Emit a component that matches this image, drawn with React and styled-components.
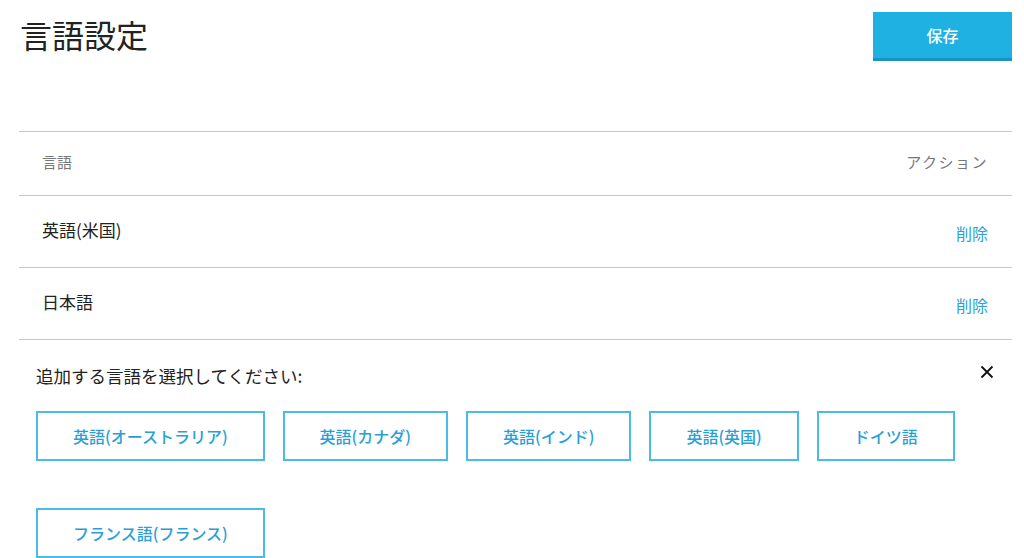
import styled, { createGlobalStyle } from 'styled-components'

const Global = createGlobalStyle`
body {
  margin: 0;
  background: #fff;
  font-family: "Noto Sans CJK JP", "Noto Sans", sans-serif;
  color: #222;
}
`;

const Page = styled.div`
display: flex;
flex-direction: column;
padding: 12px 12px 0 19px;
`;

const Header = styled.div`
display: flex;
justify-content: space-between;
align-items: flex-start;
height: 119px;
`;

const Title = styled.h1`
margin: 3px 0 0 1px;
font-size: 32px;
font-weight: 400;
line-height: 38px;
color: #222;
`;

const SaveButton = styled.button`
width: 139px;
height: 49px;
border: none;
border-bottom: 3px solid #1a93c0;
background: #20b1e3;
color: #fff;
font-family: inherit;
font-size: 16px;
font-weight: 500;
padding: 0;
cursor: pointer;
`;

const Table = styled.div`
display: flex;
flex-direction: column;
border-top: 1px solid #c8c8c8;
`;

const Row = styled.div`
display: flex;
justify-content: space-between;
align-items: center;
box-sizing: border-box;
height: ${p => p.$head ? 64 : 72}px;
padding: 0 24px 4px 23px;
border-bottom: 1px solid #c8c8c8;
`;

const HeadCell = styled.span`
font-size: 15px;
color: #777;
letter-spacing: ${p => p.$spaced ? '1.5px' : '0'};
`;

const LangName = styled.span`
font-size: 17px;
color: #222;
`;

const DeleteLink = styled.a`
font-size: 16px;
color: #2a9fd6;
margin-top: 6px;
cursor: pointer;
`;

const AddSection = styled.div`
display: flex;
flex-direction: column;
padding: 20px 18px 0 17px;
`;

const AddHead = styled.div`
display: flex;
justify-content: space-between;
align-items: center;
height: 30px;
`;

const Prompt = styled.span`
font-size: 17.5px;
color: #222;
`;

const CloseIcon = styled.svg`
width: 14px;
height: 14px;
margin-top: -6px;
cursor: pointer;
`;

const Choices = styled.div`
display: flex;
flex-wrap: wrap;
column-gap: 18px;
row-gap: 47px;
margin-top: 21px;
`;

const Choice = styled.button`
height: 50px;
padding: 0 35px;
background: #fff;
border: 2px solid #4dbbe8;
color: #2a9fd6;
font-family: inherit;
font-size: 16px;
font-weight: 500;
cursor: pointer;
`;

const choices = [
  '英語(オーストラリア)',
  '英語(カナダ)',
  '英語(インド)',
  '英語(英国)',
  'ドイツ語',
  'フランス語(フランス)',
];

const languages = ['英語(米国)', '日本語'];

const App = () => {
  return (
    <Page>
      <Global />
      <Header>
        <Title>言語設定</Title>
        <SaveButton>保存</SaveButton>
      </Header>
      <Table>
        <Row $head>
          <HeadCell>言語</HeadCell>
          <HeadCell $spaced>アクション</HeadCell>
        </Row>
        {languages.map(l => (
          <Row key={l}>
            <LangName>{l}</LangName>
            <DeleteLink>削除</DeleteLink>
          </Row>
        ))}
      </Table>
      <AddSection>
        <AddHead>
          <Prompt>追加する言語を選択してください:</Prompt>
          <CloseIcon viewBox="0 0 14 14">
            <path d="M1.5 1.5 L12.5 12.5 M12.5 1.5 L1.5 12.5" stroke="#111" strokeWidth="1.8" fill="none" />
          </CloseIcon>
        </AddHead>
        <Choices>
          {choices.map(c => (
            <Choice key={c}>{c}</Choice>
          ))}
        </Choices>
      </AddSection>
    </Page>
  )
}

export default App;
